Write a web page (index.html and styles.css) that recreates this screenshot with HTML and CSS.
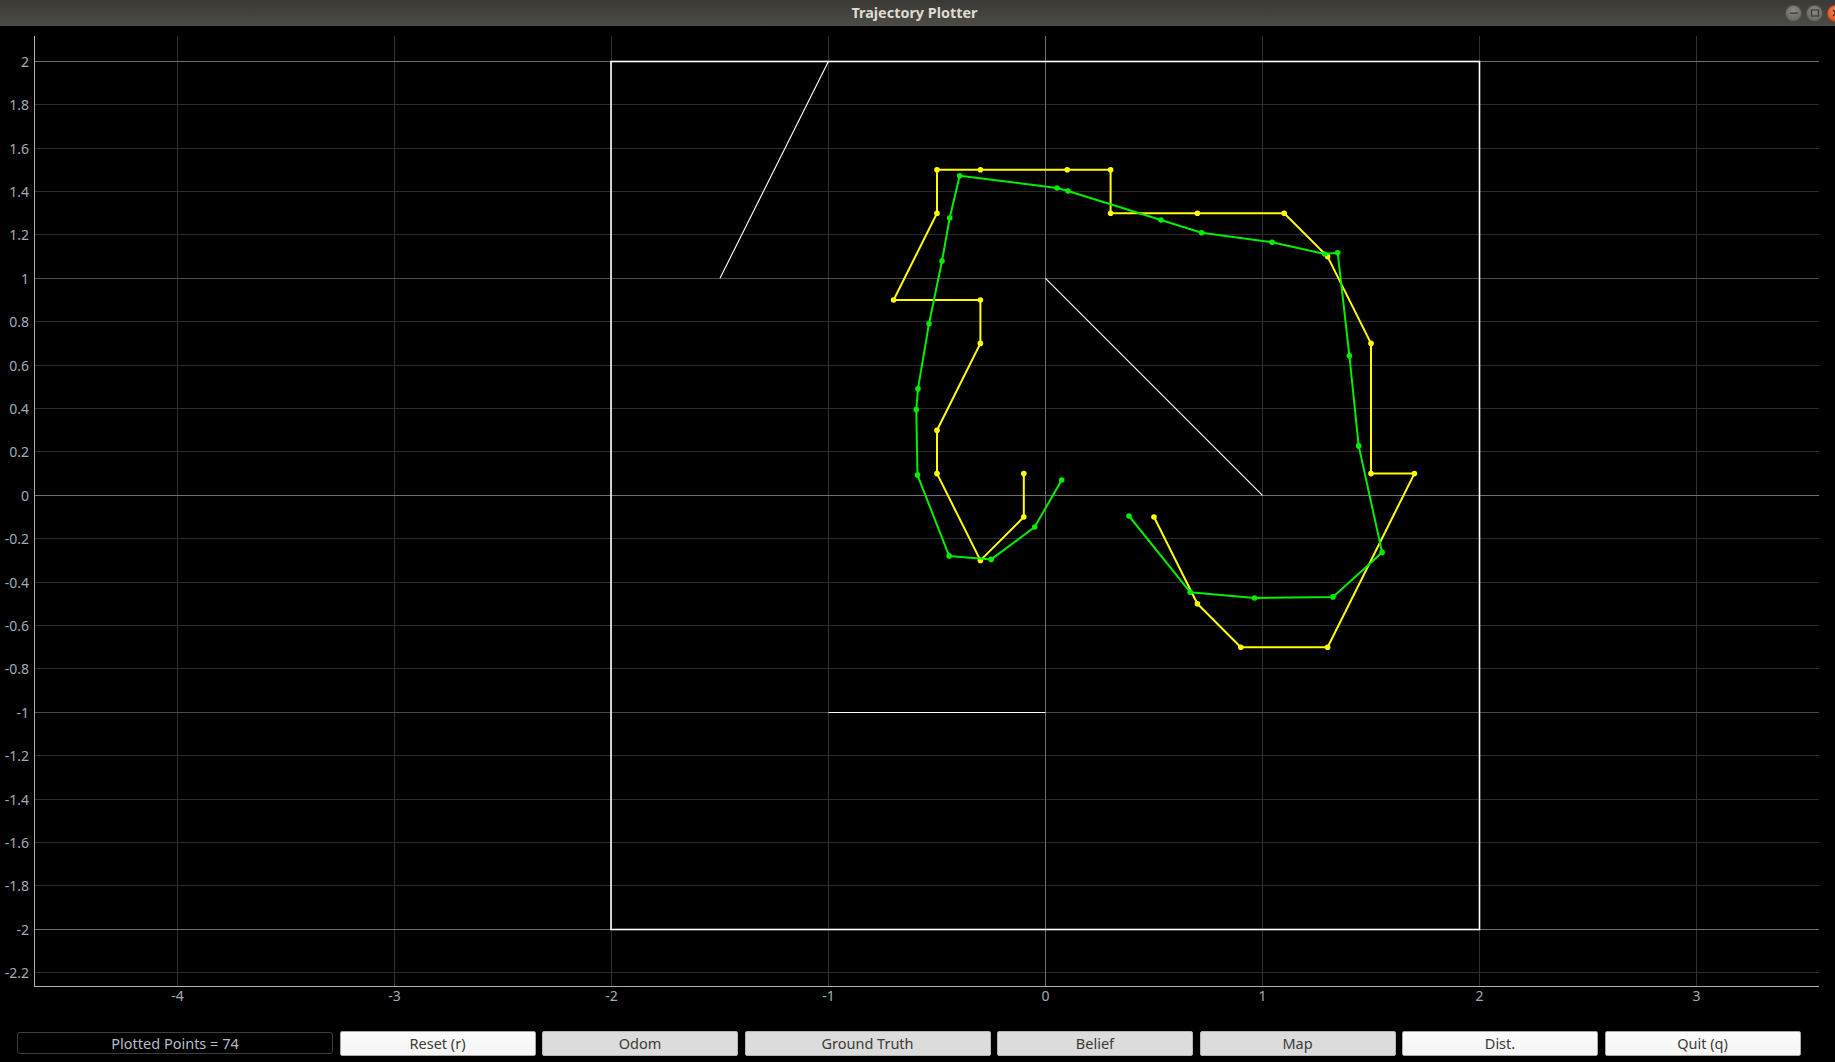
FILE: index.html
```html
<!DOCTYPE html>
<html>
<head>
<meta charset="utf-8">
<title>Trajectory Plotter</title>
<link rel="stylesheet" href="styles.css">
</head>
<body>
<div class="window">
  <header class="titlebar">
    <div class="tb-side"></div>
    <div class="tb-title">Trajectory Plotter</div>
    <div class="tb-controls">
      <span class="wbtn wbtn-min"><svg width="16" height="16" viewBox="0 0 16 16"><rect x="4" y="7.5" width="8" height="1.3" fill="#3a3a37"/></svg></span>
      <span class="wbtn wbtn-max"><svg width="16" height="16" viewBox="0 0 16 16"><rect x="4.5" y="5" width="7" height="6" fill="none" stroke="#3a3a37" stroke-width="1.2"/></svg></span>
      <span class="wbtn wbtn-close"><svg width="16" height="16" viewBox="0 0 16 16"><path d="M5 5 L11 11 M11 5 L5 11" stroke="#3a2a22" stroke-width="1.4"/></svg></span>
    </div>
  </header>

  <svg class="plot" width="1835" height="1005" viewBox="0 26 1835 1005">
    <g class="grid-minor" stroke="#2b2b2b" stroke-width="1">
      <line x1="35" y1="104.5" x2="1819" y2="104.5"/>
      <line x1="35" y1="148.5" x2="1819" y2="148.5"/>
      <line x1="35" y1="191.5" x2="1819" y2="191.5"/>
      <line x1="35" y1="234.5" x2="1819" y2="234.5"/>
      <line x1="35" y1="321.5" x2="1819" y2="321.5"/>
      <line x1="35" y1="365.5" x2="1819" y2="365.5"/>
      <line x1="35" y1="408.5" x2="1819" y2="408.5"/>
      <line x1="35" y1="451.5" x2="1819" y2="451.5"/>
      <line x1="35" y1="538.5" x2="1819" y2="538.5"/>
      <line x1="35" y1="582.5" x2="1819" y2="582.5"/>
      <line x1="35" y1="625.5" x2="1819" y2="625.5"/>
      <line x1="35" y1="668.5" x2="1819" y2="668.5"/>
      <line x1="35" y1="755.5" x2="1819" y2="755.5"/>
      <line x1="35" y1="799.5" x2="1819" y2="799.5"/>
      <line x1="35" y1="842.5" x2="1819" y2="842.5"/>
      <line x1="35" y1="885.5" x2="1819" y2="885.5"/>
      <line x1="35" y1="972.5" x2="1819" y2="972.5"/>
    </g>
    <g class="grid-vert" stroke="#303030" stroke-width="1">
      <line x1="177.5" y1="36" x2="177.5" y2="986"/>
      <line x1="394.5" y1="36" x2="394.5" y2="986"/>
      <line x1="611.5" y1="36" x2="611.5" y2="986"/>
      <line x1="828.5" y1="36" x2="828.5" y2="986"/>
      <line x1="1262.5" y1="36" x2="1262.5" y2="986"/>
      <line x1="1479.5" y1="36" x2="1479.5" y2="986"/>
      <line x1="1696.5" y1="36" x2="1696.5" y2="986"/>
    </g>
    <g class="grid-major" stroke="#4a4a4a" stroke-width="1">
      <line x1="35" y1="278.5" x2="1819" y2="278.5"/>
      <line x1="35" y1="712.5" x2="1819" y2="712.5"/>
    </g>
    <g class="grid-bright" stroke="#6e6e6e" stroke-width="1">
      <line x1="35" y1="61.5" x2="1819" y2="61.5"/>
      <line x1="35" y1="929.5" x2="1819" y2="929.5"/>
      <line x1="35" y1="495.5" x2="1819" y2="495.5"/>
      <line x1="1045.5" y1="36" x2="1045.5" y2="986"/>
    </g>
    <g class="axes" stroke="#b0b0b0" stroke-width="1">
      <line x1="34.5" y1="36" x2="34.5" y2="987"/>
      <line x1="34" y1="986.5" x2="1819" y2="986.5"/>
    </g>

    <g class="ylabels" font-family="Noto Sans, DejaVu Sans, sans-serif" font-size="14" fill="#a3abb6" text-anchor="end">
      <text x="29" y="66.5">2</text>
      <text x="29" y="109.5">1.8</text>
      <text x="29" y="153.5">1.6</text>
      <text x="29" y="196.5">1.4</text>
      <text x="29" y="239.5">1.2</text>
      <text x="29" y="283.5">1</text>
      <text x="29" y="326.5">0.8</text>
      <text x="29" y="370.5">0.6</text>
      <text x="29" y="413.5">0.4</text>
      <text x="29" y="456.5">0.2</text>
      <text x="29" y="500.5">0</text>
      <text x="29" y="543.5">-0.2</text>
      <text x="29" y="587.5">-0.4</text>
      <text x="29" y="630.5">-0.6</text>
      <text x="29" y="673.5">-0.8</text>
      <text x="29" y="717.5">-1</text>
      <text x="29" y="760.5">-1.2</text>
      <text x="29" y="804.5">-1.4</text>
      <text x="29" y="847.5">-1.6</text>
      <text x="29" y="890.5">-1.8</text>
      <text x="29" y="934.5">-2</text>
      <text x="29" y="977.5">-2.2</text>
    </g>
    <g class="xlabels" font-family="Noto Sans, DejaVu Sans, sans-serif" font-size="14" fill="#a3abb6" text-anchor="middle">
      <text x="177.5" y="1000.5">-4</text>
      <text x="394.5" y="1000.5">-3</text>
      <text x="611.5" y="1000.5">-2</text>
      <text x="828.5" y="1000.5">-1</text>
      <text x="1045.5" y="1000.5">0</text>
      <text x="1262.5" y="1000.5">1</text>
      <text x="1479.5" y="1000.5">2</text>
      <text x="1696.5" y="1000.5">3</text>
    </g>

    <g class="map" stroke="#ffffff" fill="none">
      <rect x="611" y="61.5" width="868.5" height="868" stroke-width="1.6"/>
      <line x1="720" y1="278.3" x2="828.5" y2="61.3" stroke-width="1.1"/>
      <line x1="1045.5" y1="278.3" x2="1262.5" y2="495.3" stroke-width="1.1"/>
      <line x1="828.5" y1="712.5" x2="1045.5" y2="712.5" stroke-width="1.2"/>
    </g>

    <g class="truth">
      <polyline fill="none" stroke="#ffff00" stroke-width="2" stroke-linejoin="round"
        points="1023.8,473.6 1023.8,517 980.4,560.4 937,473.6 937,430.2 980.4,343.4 980.4,300 893.6,300 937,213.2 937,169.8 980.4,169.8 1067.2,169.8 1110.6,169.8 1110.6,213.2 1197.4,213.2 1284.2,213.2 1327.6,256.6 1371,343.4 1371,473.6 1414.4,473.6 1327.6,647.2 1240.8,647.2 1197.4,603.8 1154,517"/>
      <g fill="#ffff00">
        <circle cx="1023.8" cy="473.6" r="2.8"/>
        <circle cx="1023.8" cy="517" r="2.8"/>
        <circle cx="980.4" cy="560.4" r="2.8"/>
        <circle cx="937" cy="473.6" r="2.8"/>
        <circle cx="937" cy="430.2" r="2.8"/>
        <circle cx="980.4" cy="343.4" r="2.8"/>
        <circle cx="980.4" cy="300" r="2.8"/>
        <circle cx="893.6" cy="300" r="2.8"/>
        <circle cx="937" cy="213.2" r="2.8"/>
        <circle cx="937" cy="169.8" r="2.8"/>
        <circle cx="980.4" cy="169.8" r="2.8"/>
        <circle cx="1067.2" cy="169.8" r="2.8"/>
        <circle cx="1110.6" cy="169.8" r="2.8"/>
        <circle cx="1110.6" cy="213.2" r="2.8"/>
        <circle cx="1197.4" cy="213.2" r="2.8"/>
        <circle cx="1284.2" cy="213.2" r="2.8"/>
        <circle cx="1327.6" cy="256.6" r="2.8"/>
        <circle cx="1371" cy="343.4" r="2.8"/>
        <circle cx="1371" cy="473.6" r="2.8"/>
        <circle cx="1414.4" cy="473.6" r="2.8"/>
        <circle cx="1327.6" cy="647.2" r="2.8"/>
        <circle cx="1240.8" cy="647.2" r="2.8"/>
        <circle cx="1197.4" cy="603.8" r="2.8"/>
        <circle cx="1154" cy="517" r="2.8"/>
      </g>
    </g>

    <g class="belief">
      <polyline fill="none" stroke="#00ee00" stroke-width="2" stroke-linejoin="round"
        points="1061.7,480 1034.7,527 991.2,559.4 949.1,555.9 917.5,475.1 916.3,409.6 918,388.7 929,323.7 942,261 949.7,218 959.7,175.7 1057,188 1068,191 1161,220 1201.7,232.7 1272.1,242.3 1324.8,254 1337.7,252.8 1349.4,355.8 1358.7,445.9 1382.1,552.4 1333,596.9 1254.6,598 1190.2,592.2 1129,516"/>
      <g fill="#00ee00">
        <circle cx="1061.7" cy="480" r="2.8"/>
        <circle cx="1034.7" cy="527" r="2.8"/>
        <circle cx="991.2" cy="559.4" r="2.8"/>
        <circle cx="949.1" cy="555.9" r="2.8"/>
        <circle cx="917.5" cy="475.1" r="2.8"/>
        <circle cx="916.3" cy="409.6" r="2.8"/>
        <circle cx="918" cy="388.7" r="2.8"/>
        <circle cx="929" cy="323.7" r="2.8"/>
        <circle cx="942" cy="261" r="2.8"/>
        <circle cx="949.7" cy="218" r="2.8"/>
        <circle cx="959.7" cy="175.7" r="2.8"/>
        <circle cx="1057" cy="188" r="2.8"/>
        <circle cx="1068" cy="191" r="2.8"/>
        <circle cx="1161" cy="220" r="2.8"/>
        <circle cx="1201.7" cy="232.7" r="2.8"/>
        <circle cx="1272.1" cy="242.3" r="2.8"/>
        <circle cx="1324.8" cy="254" r="2.8"/>
        <circle cx="1337.7" cy="252.8" r="2.8"/>
        <circle cx="1349.4" cy="355.8" r="2.8"/>
        <circle cx="1358.7" cy="445.9" r="2.8"/>
        <circle cx="1382.1" cy="552.4" r="2.8"/>
        <circle cx="1333" cy="596.9" r="2.8"/>
        <circle cx="1254.6" cy="598" r="2.8"/>
        <circle cx="1190.2" cy="592.2" r="2.8"/>
        <circle cx="1129" cy="516" r="2.8"/>
      </g>
    </g>
  </svg>

  <footer class="controls">
    <div class="status">Plotted Points = 74</div>
    <button class="btn btn-light">Reset (r)</button>
    <button class="btn btn-on">Odom</button>
    <button class="btn btn-on btn-wide">Ground Truth</button>
    <button class="btn btn-on">Belief</button>
    <button class="btn btn-on">Map</button>
    <button class="btn btn-light">Dist.</button>
    <button class="btn btn-light">Quit (q)</button>
  </footer>
</div>
</body>
</html>
```

FILE: styles.css
```css
html, body {
  margin: 0;
  padding: 0;
  background: #000;
}

.window {
  width: 1835px;
  height: 1062px;
  overflow: hidden;
  background: #000;
  display: flex;
  flex-direction: column;
}

.titlebar {
  height: 26px;
  flex: 0 0 26px;
  display: grid;
  grid-template-columns: 1fr auto 1fr;
  align-items: center;
  background: linear-gradient(to bottom, #3a3935 0%, #46443f 60%, #4d4b46 100%);
  overflow: hidden;
}

.tb-title {
  font-family: "Noto Sans", "Open Sans", "DejaVu Sans", sans-serif;
  font-weight: bold;
  font-size: 14.4px;
  color: #dfdbd2;
  padding-right: 6px;
  margin-top: -1px;
}

.tb-controls {
  display: flex;
  justify-content: flex-end;
  align-items: center;
  gap: 4px;
  margin-right: -9px;
}

.wbtn {
  width: 17px;
  height: 17px;
  border-radius: 50%;
  display: flex;
  align-items: center;
  justify-content: center;
  box-shadow: inset 0 0 0 1px rgba(0,0,0,0.25);
}

.wbtn svg {
  display: block;
}

.wbtn-min,
.wbtn-max {
  background: radial-gradient(circle at 50% 35%, #8c8b86 0%, #6e6d68 60%, #5a5955 100%);
}

.wbtn-close {
  background: radial-gradient(circle at 50% 35%, #f58a5c 0%, #e8602b 55%, #c9471a 100%);
}

.plot {
  display: block;
  flex: 0 0 1005px;
}

.controls {
  flex: 1 1 auto;
  display: flex;
  align-items: flex-start;
  gap: 6.5px;
  padding-left: 17px;
}

.status {
  box-sizing: border-box;
  width: 316px;
  height: 22px;
  margin-top: 1.3px;
  border: 1px solid #3e3e3e;
  border-radius: 3px;
  display: flex;
  align-items: center;
  justify-content: center;
  font-family: "Noto Sans", "Open Sans", "DejaVu Sans", sans-serif;
  font-size: 14.5px;
  color: #b5bcc6;
}

.btn {
  box-sizing: border-box;
  width: 196px;
  height: 24.5px;
  padding: 0;
  border: 1px solid #a9a9a9;
  border-radius: 2px;
  font-family: "Noto Sans", "Open Sans", "DejaVu Sans", sans-serif;
  font-size: 14.5px;
  color: #3c3b37;
  display: flex;
  align-items: center;
  justify-content: center;
}

.btn-wide {
  width: 246px;
}

.btn-light {
  background: linear-gradient(to bottom, #fdfdfd 0%, #f4f4f4 100%);
}

.btn-on {
  background: #dcdcdc;
  border-color: #b4b4b4;
}
```
